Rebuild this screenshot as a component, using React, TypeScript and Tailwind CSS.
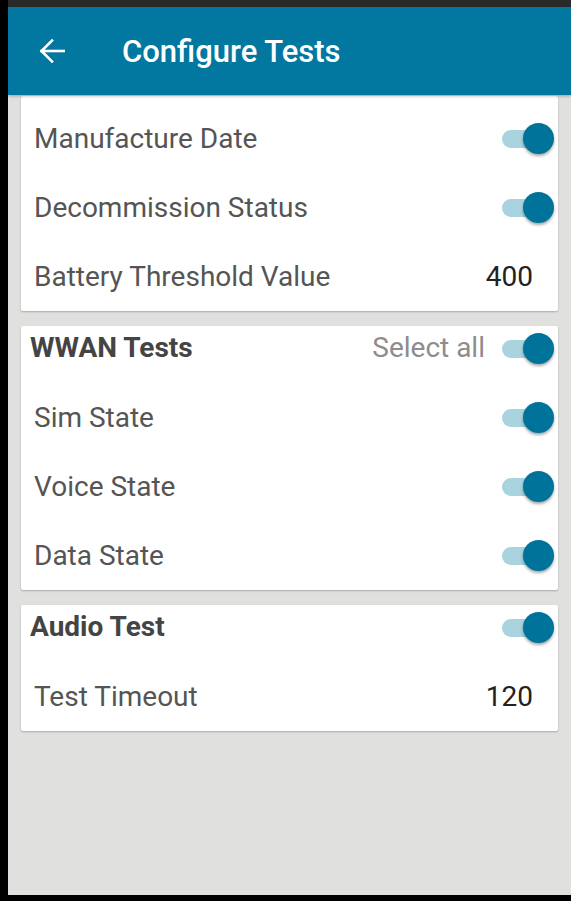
function Toggle() {
  return (
    <div className="relative w-[52px] h-[31px] shrink-0">
      <div className="absolute left-0 top-[7px] w-[44px] h-[18px] rounded-full bg-[#a8d3df]" />
      <div className="absolute right-0 top-0 w-[31px] h-[31px] rounded-full bg-[#00739b] shadow-[0_2px_3px_rgba(0,0,0,0.35)]" />
    </div>
  );
}

function Row({ label, value }: { label: string; value?: string }) {
  return (
    <div className="h-[69px] flex items-center justify-between pl-[13px] pr-[4px]">
      <span className="text-[28px] text-[#555]">{label}</span>
      {value ? <span className="text-[28px] text-[#222] pr-[21px]">{value}</span> : <Toggle />}
    </div>
  );
}

function Header({ title, selectAll }: { title: string; selectAll?: boolean }) {
  return (
    <div className="h-[44px] flex items-center justify-between pl-[9px] pr-[4px]">
      <span className="text-[28px] font-bold text-[#444]">{title}</span>
      <div className="flex items-center gap-[17px]">
        {selectAll && <span className="text-[28px] text-[#8d8d8d]">Select all</span>}
        <Toggle />
      </div>
    </div>
  );
}

export default function App() {
  return (
    <div className="w-[571px] h-[901px] flex bg-black" style={{ fontFamily: "Roboto, 'Liberation Sans', sans-serif" }}>
      <div className="w-[8px] shrink-0 bg-black" />
      <div className="flex-1 flex flex-col">
        <div className="h-[7px] bg-[#2a2a2a]" />
        <div className="h-[88px] pt-[3px] bg-[#02779f] flex items-center text-white relative z-10 shadow-[0_1px_3px_rgba(0,0,0,0.3)]">
          <svg viewBox="0 0 26 26" className="w-[26px] h-[26px] ml-[31px] -mt-[3px]" fill="none" stroke="currentColor" strokeWidth={2.6} strokeLinecap="square">
            <path d="M25 13H2.5" />
            <path d="M13 2.5 2.5 13 13 23.5" />
          </svg>
          <span className="ml-[57px] text-[31px] font-medium">Configure Tests</span>
        </div>
        <div className="flex-1 bg-[#e0e1df] px-[13px] pt-px flex flex-col gap-[15px]">
          <div className="bg-white rounded-[2px] shadow-[0_1px_2px_rgba(0,0,0,0.25)] pt-[8px]">
            <Row label="Manufacture Date" />
            <Row label="Decommission Status" />
            <Row label="Battery Threshold Value" value="400" />
          </div>
          <div className="bg-white rounded-[2px] shadow-[0_1px_2px_rgba(0,0,0,0.25)]">
            <div className="mb-[13px]">
              <Header title="WWAN Tests" selectAll />
            </div>
            <Row label="Sim State" />
            <Row label="Voice State" />
            <Row label="Data State" />
          </div>
          <div className="bg-white rounded-[2px] shadow-[0_1px_2px_rgba(0,0,0,0.25)]">
            <div className="mb-[13px]">
              <Header title="Audio Test" />
            </div>
            <Row label="Test Timeout" value="120" />
          </div>
        </div>
        <div className="h-[6px] bg-black" />
      </div>
    </div>
  );
}
